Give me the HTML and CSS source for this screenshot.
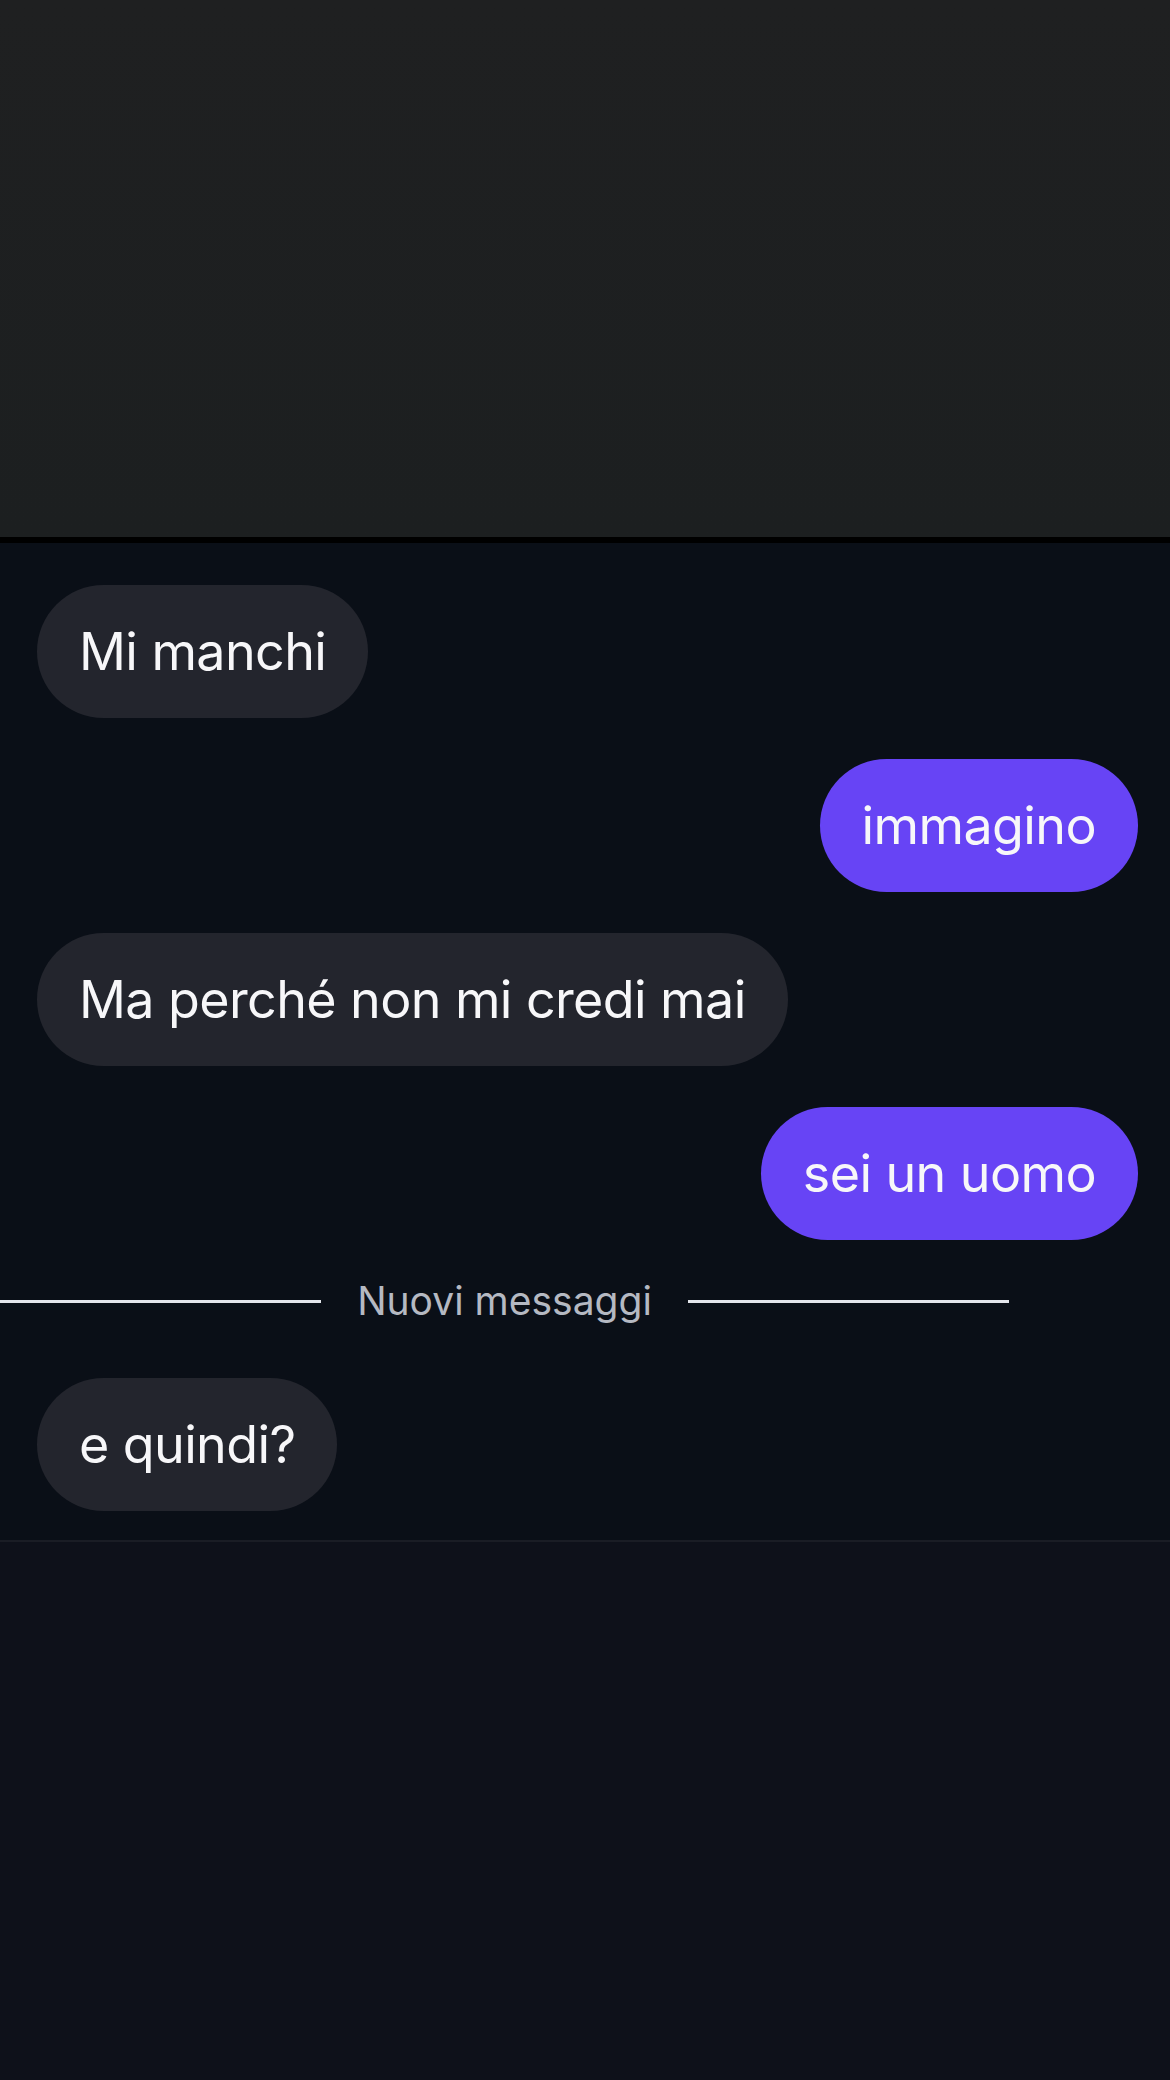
FILE: index.html
```html
<!DOCTYPE html>
<html lang="it">
<head>
  <meta charset="UTF-8" />
  <meta name="viewport" content="width=device-width, initial-scale=1.0"/>
  <title>Chat</title>
  <link rel="stylesheet" href="styles.css">
</head>
<body>
  <div class="top-area"></div>
  <div class="split"></div>

  <main class="chat">
    <div class="bubble in">Mi manchi</div>
    <div class="bubble out">immagino</div>
    <div class="bubble in">Ma perché non mi credi mai</div>
    <div class="bubble out">sei un uomo</div>

    <div class="divider">
      <span class="line"></span>
      <span class="divider-text">Nuovi messaggi</span>
      <span class="line"></span>
    </div>

    <div class="bubble in">e quindi?</div>
  </main>

  <footer class="composer"></footer>
</body>
</html>
```

FILE: styles.css
```css
html, body {
  margin: 0;
  height: 100%;
}

body {
  font-family: Inter, 'Noto Sans', sans-serif;
  background-color: #0e111a;
  display: flex;
  flex-direction: column;
  min-height: 2080px;
}

.top-area {
  height: 537px;
  background: linear-gradient(180deg, #1f2021 0%, #1c1f20 100%);
}

.split {
  height: 6px;
  background-color: #000;
}

.chat {
  background-color: #0a0f17;
  padding: 42px 32px 29px 37px;
  display: flex;
  flex-direction: column;
  align-items: flex-start;
  gap: 41px;
  border-bottom: 2px solid #1a1d25;
}

.bubble {
  font-size: 52px;
  line-height: 65px;
  letter-spacing: -0.6px;
  color: #f7f7f9;
  padding: 34px 42px;
  border-radius: 70px;
  white-space: nowrap;
}

.bubble.in {
  background-color: #23252d;
}

.bubble.out {
  align-self: flex-end;
  background-color: #6744f5;
}

.divider {
  align-self: stretch;
  margin: 0 0 16px -37px;
  padding-right: 129px;
  display: flex;
  align-items: center;
  gap: 36px;
  height: 40px;
}

.divider .line {
  flex: 1;
  height: 3px;
  background-color: #e4e6ec;
}

.divider-text {
  font-size: 39px;
  line-height: 40px;
  color: #b5b9c2;
}

.composer {
  flex: 1;
  background-color: #0e111a;
}
```
